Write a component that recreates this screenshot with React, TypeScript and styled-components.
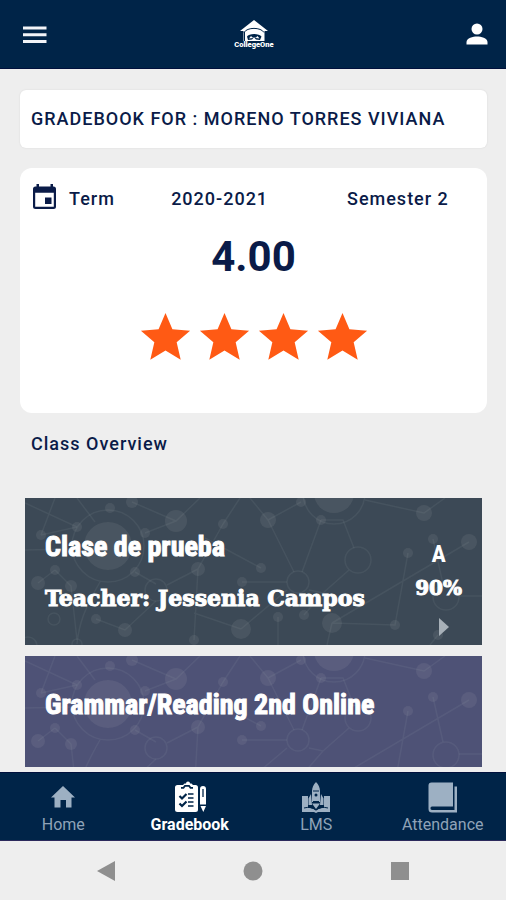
import React from "react";
import styled, { createGlobalStyle } from "styled-components";

const navy = "#002448";
const ink = "#0a1b48";
const paper = "#eeeeee";
const condensed = `"Roboto Condensed", "Open Sans Condensed", Roboto, sans-serif`;
const slab = `"DejaVu Serif", serif`;

const GlobalStyle = createGlobalStyle`
  *, *::before, *::after { box-sizing: border-box; }
  body { margin: 0; background: ${paper}; font-family: Roboto, "Liberation Sans", sans-serif; color: ${ink}; }
  h1, h2, h3, p, ul { margin: 0; padding: 0; font-weight: inherit; }
  button { border: 0; padding: 0; background: none; font: inherit; color: inherit; cursor: pointer; }
  svg { display: block; }
`;

const Screen = styled.div`
  display: flex;
  flex-direction: column;
  height: 100vh;
`;

const TopBar = styled.header`
  display: flex;
  flex: none;
  align-items: center;
  justify-content: space-between;
  height: 69px;
  padding: 0 14px 0 20px;
  background: ${navy};
  border-bottom: 1px solid #00103c;
  color: #fff;
`;

const IconButton = styled.button`
  display: grid;
  place-items: center;
`;

const Content = styled.main`
  display: flex;
  flex: 1;
  flex-direction: column;
  min-height: 0;
  padding: 21px 19px 5px 20px;
`;

const TitleCard = styled.section`
  flex: none;
  padding: 20px 11px;
  background: #fff;
  border-radius: 6px;
  box-shadow: 0 0 2px rgba(0, 0, 0, 0.1);
`;

const Heading = styled.h1`
  font-size: 18px;
  line-height: 18px;
  font-weight: 500;
  letter-spacing: 1px;
`;

const TermCard = styled.section`
  flex: none;
  margin-top: 20px;
  padding: 14px 11px 46px;
  background: #fff;
  border-radius: 12px;
`;

const TermRow = styled.div`
  display: grid;
  grid-template-columns: 28px 5fr 9fr 7fr;
  column-gap: 10px;
  align-items: center;
  height: 32px;
  font-size: 18px;
  font-weight: 500;
  letter-spacing: 1px;
`;

const Score = styled.p`
  margin-top: 18px;
  font-size: 42px;
  line-height: 50px;
  font-weight: 700;
  text-align: center;
`;

const Stars = styled.div`
  display: flex;
  justify-content: center;
  margin-top: 26px;
  color: #ff5a14;
`;

const SectionTitle = styled.h2`
  flex: none;
  margin: 21px 11px 0;
  font-size: 18px;
  line-height: 20px;
  font-weight: 500;
  letter-spacing: 1px;
`;

const ClassList = styled.ul`
  flex: 1;
  min-height: 0;
  margin: 44px 5px 0;
  overflow: hidden;
  list-style: none;
`;

const ClassCard = styled.li<{ $tone: string }>`
  position: relative;
  display: flex;
  justify-content: space-between;
  height: 147px;
  margin-bottom: 11px;
  padding: 30px 20px 0 20px;
  background: ${(p) => p.$tone};
  color: #fff;
`;

const Backdrop = styled.svg`
  position: absolute;
  inset: 0;
  width: 100%;
  height: 100%;
`;

const ClassText = styled.div`
  position: relative;
`;

const ClassName = styled.h3`
  font-family: ${condensed};
  font-size: 28px;
  line-height: 38px;
  font-weight: 700;
  -webkit-text-stroke: 1px currentColor;
`;

const Teacher = styled.p`
  margin-top: 20px;
  font-family: ${slab};
  font-size: 22px;
  line-height: 24px;
  font-weight: 700;
  -webkit-text-stroke: 1px currentColor;
`;

const Grade = styled.div`
  position: relative;
  display: flex;
  flex-direction: column;
  align-items: center;
  padding-top: 12px;
`;

const Letter = styled.span`
  font-family: ${condensed};
  font-size: 24px;
  line-height: 28px;
  font-weight: 700;
`;

const Percent = styled.span`
  margin-top: 8px;
  font-family: ${slab};
  font-size: 20px;
  line-height: 24px;
  font-weight: 700;
  -webkit-text-stroke: 1px currentColor;
`;

const OpenButton = styled(IconButton)`
  margin: 18px 0 0 10px;
  color: #a7b0b8;
`;

const Tabs = styled.nav`
  display: grid;
  flex: none;
  grid-template-columns: repeat(4, 1fr);
  height: 69px;
  background: ${navy};
  border-top: 1px solid #00103c;
  border-bottom: 1px solid #2c2a5c;
`;

const Tab = styled.button<{ $active?: boolean }>`
  display: flex;
  flex-direction: column;
  align-items: center;
  padding-top: 8px;
  color: ${(p) => (p.$active ? "#ffffff" : "#9db0c3")};
`;

const TabLabel = styled.span<{ $active?: boolean }>`
  margin-top: 1px;
  font-size: 16px;
  line-height: 18px;
  font-weight: ${(p) => (p.$active ? 700 : 400)};
  color: ${(p) => (p.$active ? "#ffffff" : "#8fa3b8")};
`;

const SystemBar = styled.footer`
  display: flex;
  flex: none;
  align-items: center;
  justify-content: space-between;
  height: 59px;
  padding: 0 96px;
  color: #8f8f8f;
`;

const MenuIcon = () => (
  <svg width="30" height="30" viewBox="0 0 30 30" fill="#f2f4f8">
    <path d="M3 7.500h23.500v3H3zM3 14.200h23.500v3H3zM3 20.900h23.500v3H3z" />
  </svg>
);

const PersonIcon = () => (
  <svg width="30" height="30" viewBox="0 0 30 30" fill="currentColor">
    <circle cx="15" cy="10" r="5.500" />
    <path d="M4.500 25.500v-2.500c0-3.800 6.500-5.500 10.500-5.500s10.500 1.700 10.500 5.500v2.500z" />
  </svg>
);

const Logo = () => (
  <svg width="46" height="32" viewBox="0 0 46 32" role="img" aria-label="CollegeOne">
    <path d="M21 2 35 13h-3.500v10h-21V13H7z" fill="#fff" />
    <path d="M11 14.500c3-5.500 17-5.500 20 0M11.500 14v9" fill="none" stroke={navy} strokeWidth="1" />
    <path d="M14 18.500c1.500-3.500 12.500-3.500 14.500 0l-1.500 3.500-4-.5-2-2-2 2-4 .5z" fill={navy} />
    <path d="M16 20.500l2-2.500 2 2zM22.500 20l2-2 2 2.500z" fill="#fff" />
    <path d="M20 19.500l1 1 1-1" stroke="#fff" fill="none" />
    <text x="21" y="28.500" textAnchor="middle" fontFamily="Roboto, sans-serif" fontSize="7.500" fontWeight="900" fill="#fff">
      CollegeOne
    </text>
  </svg>
);

const CalendarIcon = () => (
  <svg width="28" height="28" viewBox="0 0 28 28" fill={ink}>
    <path
      fillRule="evenodd"
      d="M5.500 0H8v2.500h11.500V0H22v2.500h.5A2.500 2.500 0 0 1 25 5v17.500a2.500 2.500 0 0 1-2.500 2.500h-18A2.500 2.500 0 0 1 2 22.500V5a2.500 2.500 0 0 1 2.500-2.500h1zM4.200 8.800v14h18.600v-14z"
    />
    <path d="M14 13.500h6.500V20H14z" />
  </svg>
);

const StarIcon = () => (
  <svg width="59" height="59" viewBox="0 0 24 24" fill="currentColor">
    <path d="M12 17.270 18.180 21l-1.640-7.030L22 9.240l-7.190-.61L12 2 9.190 8.630 2 9.240l5.460 4.730L5.820 21z" />
  </svg>
);

const HomeIcon = () => (
  <svg width="34" height="34" viewBox="0 0 34 34" fill="currentColor">
    <path d="M17 5 29 16.500h-3.500v10H20V19h-5.500v7.500h-6v-10H5z" />
  </svg>
);

const GradebookIcon = () => (
  <svg width="34" height="34" viewBox="0 0 34 34" fill="currentColor">
    <path d="M5 4h5l1.500-1.500h1.500a2 2 0 0 1 4 0h1.500L20 4h2.500A2.500 2.500 0 0 1 25 6.500v22a2.500 2.500 0 0 1-2.500 2.500h-18A2.500 2.500 0 0 1 2 28.500v-22A2.500 2.500 0 0 1 4.500 4z" />
    <path d="M8 6.800h2.500l1.500-2h4l1.500 2H20" stroke={navy} strokeWidth="1.800" fill="none" />
    <path d="m6.500 15 2.500 2.500 4.500-4.500M6.500 22.500 9 25l4.500-4.500" stroke={navy} strokeWidth="2.200" fill="none" />
    <path d="M15 13h5.500M15 17h5.500M15 21h5.500M15 25h5.500" stroke={navy} strokeWidth="1.500" />
    <path d="M27 8a3 3 0 0 1 6 0v15.500h-6zM27.500 25h5.500l-2.700 6z" />
    <path d="M30 8v8" stroke={navy} strokeWidth="1.300" />
  </svg>
);

const LmsIcon = () => (
  <svg width="34" height="34" viewBox="0 0 34 34" fill="currentColor">
    <path d="M3 15h6v14.500c-2-.5-4-.5-6 .5zM31 15h-6v14.500c2-.5 4-.5 6 .5z" />
    <path d="M3 31v-3c5-2 10-1.500 14 1.500 4-3 9-3.500 14-1.500v3h-12l-2 1-2-1z" />
    <path d="M17 1c2.500 2.500 4 6 4 9v11h-8V10c0-3 1.500-6.500 4-9z" />
    <path d="M12 13 9.500 17.500V24H13zM22 13l2.500 4.500V24H21zM13 22.500h8L17 28z" />
    <path d="M14 10h6M14 20.500h6" stroke={navy} strokeWidth="1" />
    <circle cx="17" cy="14" r="1.500" fill={navy} />
    <path d="M5 27c4.500-1.300 8.500-.5 12 2 3.500-2.500 7.500-3.300 12-2" stroke={navy} strokeWidth="1" fill="none" />
  </svg>
);

const BookIcon = () => (
  <svg width="34" height="34" viewBox="0 0 34 34" fill="currentColor">
    <path d="M5.500 1.500H27v24H6c-2 0-2 3.500 0 3.500h22.500V5.500H31V31.500H6A3.500 3.500 0 0 1 2.500 28V4.500a3 3 0 0 1 3-3z" />
  </svg>
);

const dots = [
  [85, 10, 5], [107, 4, 6], [151, 23, 11], [198, 26, 5], [52, 29, 5], [83, 48, 24], [16, 37, 5], [120, 35, 5],
  [30, 72, 5], [13, 85, 7], [46, 88, 6], [110, 74, 5], [173, 71, 7], [217, 84, 5], [71, 121, 5], [100, 132, 7],
  [216, 131, 10], [169, 142, 5], [243, 22, 8], [276, 4, 5], [309, -5, 20], [296, 22, 5], [399, 15, 8], [236, 70, 5],
  [383, 55, 5], [408, 41, 5], [444, 44, 8], [307, 125, 10], [253, 119, 5], [279, 117, 5], [370, 127, 5], [413, 137, 5],
];

const rings = [
  [83, 48, 36], [131, 92, 11], [29, 121, 6], [52, 146, 5], [309, -5, 31], [333, 62, 13], [273, 84, 11], [421, 99, 13], [3, 148, 9],
];

const links =
  "M0 5 52 29M30 0 16 37M52 0 70 24M107 4 151 23 175 0M120 35 151 23M198 26 173 71 169 142M198 26 215 0" +
  "M0 52 47 51M16 37 52 29M30 72 46 88 52 142M13 85 30 72M75 84C60 110 54 125 52 146M110 74 131 86M142 87 173 71" +
  "M71 121 100 132 131 103M169 115 216 131M180 40 236 70M243 22 276 4M225 0 243 22 269 74M296 22 277 74M296 22 318 22 329 50" +
  "M340 2 399 15 420 0M217 84 262 84M284 92 298 95 324 72M216 131 262 92M298 95 279 117M253 119 253 147" +
  "M307 125 370 127 383 55M307 125 444 44M307 125 302 147M408 41 418 86M434 98 457 98M413 137 405 147";

const Network = () => (
  <Backdrop viewBox="0 0 457 147" preserveAspectRatio="xMidYMin slice" aria-hidden="true">
    <path d={links} fill="none" stroke="#c5cbcb" strokeOpacity="0.080" strokeWidth="1.500" />
    {rings.map(([x, y, r]) => (
      <circle key={`r${x}-${y}`} cx={x} cy={y} r={r} fill="none" stroke="#c5cbcb" strokeOpacity="0.080" strokeWidth="1.500" />
    ))}
    {dots.map(([x, y, r]) => (
      <circle key={`d${x}-${y}`} cx={x} cy={y} r={r} fill="#c8c8c4" fillOpacity="0.100" />
    ))}
  </Backdrop>
);

type Course = { name: string; teacher?: string; letter?: string; percent?: string; tone: string };

const courses: Course[] = [
  { name: "Clase de prueba", teacher: "Jessenia Campos", letter: "A", percent: "90%", tone: "#3c4956" },
  { name: "Grammar/Reading 2nd Online", tone: "#4e5276" },
];

const tabs = [
  { label: "Home", icon: <HomeIcon /> },
  { label: "Gradebook", icon: <GradebookIcon />, active: true },
  { label: "LMS", icon: <LmsIcon /> },
  { label: "Attendance", icon: <BookIcon /> },
];

export default function App() {
  return (
    <Screen>
      <GlobalStyle />
      <TopBar>
        <IconButton aria-label="Menu"><MenuIcon /></IconButton>
        <Logo />
        <IconButton aria-label="Profile"><PersonIcon /></IconButton>
      </TopBar>
      <Content>
        <TitleCard>
          <Heading>GRADEBOOK FOR : MORENO TORRES VIVIANA</Heading>
        </TitleCard>
        <TermCard>
          <TermRow>
            <CalendarIcon />
            <span>Term</span>
            <span>2020-2021</span>
            <span>Semester 2</span>
          </TermRow>
          <Score>4.00</Score>
          <Stars role="img" aria-label="4 stars">
            {[1, 2, 3, 4].map((n) => <StarIcon key={n} />)}
          </Stars>
        </TermCard>
        <SectionTitle>Class Overview</SectionTitle>
        <ClassList>
          {courses.map((c) => (
            <ClassCard key={c.name} $tone={c.tone}>
              <Network />
              <ClassText>
                <ClassName>{c.name}</ClassName>
                {c.teacher && <Teacher>Teacher: {c.teacher}</Teacher>}
              </ClassText>
              {c.letter && (
                <Grade>
                  <Letter>{c.letter}</Letter>
                  <Percent>{c.percent}</Percent>
                  <OpenButton aria-label={`Open ${c.name}`}>
                    <svg width="10" height="18" viewBox="0 0 10 18" fill="currentColor"><path d="M0 0 10 9 0 18z" /></svg>
                  </OpenButton>
                </Grade>
              )}
            </ClassCard>
          ))}
        </ClassList>
      </Content>
      <Tabs>
        {tabs.map((t) => (
          <Tab key={t.label} $active={t.active} aria-current={t.active ? "page" : undefined}>
            {t.icon}
            <TabLabel $active={t.active}>{t.label}</TabLabel>
          </Tab>
        ))}
      </Tabs>
      <SystemBar>
        <IconButton aria-label="Back">
          <svg width="20" height="20" viewBox="0 0 20 20" fill="currentColor"><path d="M19 0v20L1 10z" /></svg>
        </IconButton>
        <IconButton aria-label="Home screen">
          <svg width="20" height="20" viewBox="0 0 20 20" fill="currentColor"><circle cx="10" cy="10" r="9.500" /></svg>
        </IconButton>
        <IconButton aria-label="Recent apps">
          <svg width="20" height="20" viewBox="0 0 20 20" fill="currentColor"><path d="M1 1h18v18H1z" /></svg>
        </IconButton>
      </SystemBar>
    </Screen>
  );
}
